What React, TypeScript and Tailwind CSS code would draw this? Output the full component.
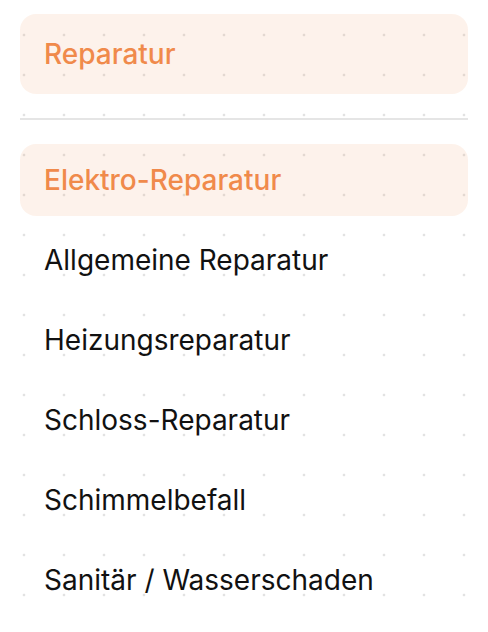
import React from 'react';

const items = [
  'Elektro-Reparatur',
  'Allgemeine Reparatur',
  'Heizungsreparatur',
  'Schloss-Reparatur',
  'Schimmelbefall',
  'Sanitär / Wasserschaden',
];

export default function App() {
  const [active, setActive] = React.useState('Elektro-Reparatur');

  return (
    <div
      className="min-h-screen w-full bg-white bg-[radial-gradient(circle,#e2e2e2_1.5px,transparent_1.6px)] bg-[size:40px_40px] bg-[position:4px_15px] px-5 pt-[14px] font-['Inter','Liberation_Sans',sans-serif]"
    >
      <div className="flex h-20 items-center rounded-2xl bg-[rgba(240,130,60,0.1)] px-6 text-[28px] font-medium text-[#f08a4b]">
        Reparatur
      </div>

      <div className="mt-6 h-[2px] bg-[#e5e5e5]" />

      <ul className="mt-6 flex flex-col gap-2">
        {items.map(item => (
          <li
            key={item}
            onClick={() => setActive(item)}
            className={
              item === active
                ? 'flex h-[72px] cursor-pointer items-center rounded-2xl bg-[rgba(240,130,60,0.1)] px-6 text-[28px] font-medium text-[#f08a4b]'
                : 'flex h-[72px] cursor-pointer items-center rounded-2xl px-6 text-[28px] text-[#111111]'
            }
          >
            {item}
          </li>
        ))}
      </ul>
    </div>
  );
}
